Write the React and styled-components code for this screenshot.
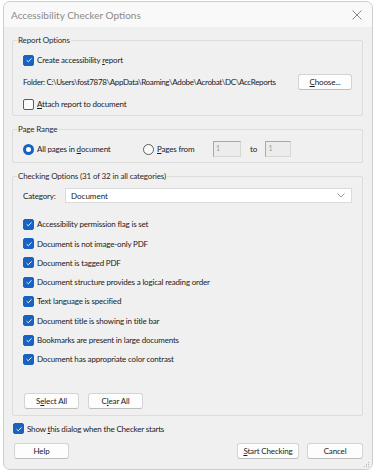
import React, { useState } from 'react';
import styled, { createGlobalStyle } from 'styled-components';

const GlobalStyle = createGlobalStyle`
  body {
    margin: 0;
    background: #ffffff;
    font-family: Lato, "Open Sans", sans-serif;
  }
`;

const checks = [
  'Accessibility permission flag is set',
  'Document is not image-only PDF',
  'Document is tagged PDF',
  'Document structure provides a logical reading order',
  'Text language is specified',
  'Document title is showing in title bar',
  'Bookmarks are present in large documents',
  'Document has appropriate color contrast',
];

const CheckBox = ({ checked, onClick }) => (
  <Box $checked={checked} onClick={onClick}>
    {checked && (
      <svg width="8" height="8" viewBox="0 0 8 8">
        <path d="M1.6 4.2 L3.3 5.8 L6.5 2.3" fill="none" stroke="#fff" strokeWidth="0.9" />
      </svg>
    )}
  </Box>
);

const Radio = ({ selected }) => <RadioDot $selected={selected} />;

const App = () => {
  const [items, setItems] = useState(checks.map(() => true));
  const [report, setReport] = useState(true);
  const [attach, setAttach] = useState(false);
  const [showDialog, setShowDialog] = useState(true);

  const toggle = (i) => setItems((prev) => prev.map((v, j) => (j === i ? !v : v)));

  return (
    <>
      <GlobalStyle />
      <Window>
        <TitleBar>
          <Title>Accessibility Checker Options</Title>
          <svg width="10" height="10" viewBox="0 0 10 10">
            <path d="M0.5 0.5 L9.5 9.5 M9.5 0.5 L0.5 9.5" stroke="#7a7a7a" strokeWidth="0.9" />
          </svg>
        </TitleBar>
        <Body>
          <Group $top={8}>
            <Legend>Report Options</Legend>
            <Rows $gap={6}>
              <Row>
                <CheckBox checked={report} onClick={() => setReport(!report)} />
                <Label>Create accessibility <u>r</u>eport</Label>
              </Row>
              <Row $between>
                <FolderText>Folder: C:\Users\fost7878\AppData\Roaming\Adobe\Acrobat\DC\AccReports</FolderText>
                <Button $w={54}><u>C</u>hoose...</Button>
              </Row>
              <Row>
                <CheckBox checked={attach} onClick={() => setAttach(!attach)} />
                <Label><u>A</u>ttach report to document</Label>
              </Row>
            </Rows>
          </Group>

          <Group $top={8} $pt={7} $pb={5}>
            <Legend>Page Range</Legend>
            <Row>
              <RadioItem $w={120}>
                <Radio selected />
                <Label>All pages in <u>d</u>ocument</Label>
              </RadioItem>
              <RadioItem $w={70}>
                <Radio />
                <Label><u>P</u>ages from</Label>
              </RadioItem>
              <PageInput $w={28}>1</PageInput>
              <ToLabel>to</ToLabel>
              <PageInput $w={26}>1</PageInput>
            </Row>
          </Group>

          <Group $top={8} $pt={7} $pb={6}>
            <Legend>Checking Options (31 of 32 in all categories)</Legend>
            <CategoryRow>
              <CategoryLabel>Cate<u>g</u>ory:</CategoryLabel>
              <Select>
                <span>Document</span>
                <svg width="8" height="5" viewBox="0 0 8 5">
                  <path d="M0.5 0.5 L4 4 L7.5 0.5" fill="none" stroke="#8a8a8a" strokeWidth="0.9" />
                </svg>
              </Select>
            </CategoryRow>
            <CheckList>
              {checks.map((c, i) => (
                <CheckRow key={c}>
                  <CheckBox checked={items[i]} onClick={() => toggle(i)} />
                  <Label>{c}</Label>
                </CheckRow>
              ))}
            </CheckList>
            <ButtonRow>
              <Button $w={55} onClick={() => setItems(checks.map(() => true))}>S<u>e</u>lect All</Button>
              <Button $w={55} onClick={() => setItems(checks.map(() => false))}>C<u>l</u>ear All</Button>
            </ButtonRow>
          </Group>

          <ShowRow>
            <CheckBox checked={showDialog} onClick={() => setShowDialog(!showDialog)} />
            <Label>Show <u>t</u>his dialog when the Checker starts</Label>
          </ShowRow>

          <Footer>
            <Button $w={55}>Help</Button>
            <FooterRight>
              <Button $w={62}><u>S</u>tart Checking</Button>
              <Button $w={56}>Cancel</Button>
            </FooterRight>
          </Footer>
        </Body>
        <Grip>
          <svg width="6" height="6" viewBox="0 0 6 6">
            <g fill="#b5b5b5">
              <rect x="4" y="0" width="1" height="1" />
              <rect x="2" y="2" width="1" height="1" />
              <rect x="4" y="2" width="1" height="1" />
              <rect x="0" y="4" width="1" height="1" />
              <rect x="2" y="4" width="1" height="1" />
              <rect x="4" y="4" width="1" height="1" />
            </g>
          </svg>
        </Grip>
      </Window>
    </>
  );
};

const Window = styled.div`
  position: relative;
  margin: 1px 0 0 3px;
  width: 368px;
  height: 467px;
  border: 1px solid #cdcdcd;
  border-radius: 7px;
  background: #f0f0f0;
  overflow: hidden;
  display: flex;
  flex-direction: column;
  color: #1a1a1a;
  font-size: 8px;
`;

const TitleBar = styled.div`
  height: 25px;
  background: #f9f9f9;
  display: flex;
  align-items: center;
  justify-content: space-between;
  padding: 0 10px 0 7px;
  flex-shrink: 0;
`;

const Title = styled.div`
  font-size: 10px;
  color: #8a8a8a;
`;

const Body = styled.div`
  display: flex;
  flex-direction: column;
  padding: 0 9px 0 8px;
`;

const Group = styled.fieldset`
  margin: ${(p) => p.$top || 8}px 0 0 0;
  border: 1px solid #dcdcdc;
  border-radius: 2px;
  padding: ${(p) => p.$pt || 7}px 10px ${(p) => p.$pb || 3}px 10px;
  min-width: 0;
`;

const Legend = styled.legend`
  margin-left: -6px;
  padding: 0 1px;
  height: 10px;
  line-height: 10px;
  font-size: 8px;
  color: #2a2a2a;
  letter-spacing: -0.15px;
`;

const Rows = styled.div`
  display: flex;
  flex-direction: column;
  gap: ${(p) => p.$gap}px;
`;

const Row = styled.div`
  display: flex;
  align-items: center;
  height: 16px;
  justify-content: ${(p) => (p.$between ? 'space-between' : 'flex-start')};
`;

const Label = styled.span`
  margin-left: 3px;
  white-space: nowrap;
  letter-spacing: -0.18px;
`;

const FolderText = styled.span`
  white-space: nowrap;
  letter-spacing: -0.35px;
`;

const Box = styled.span`
  box-sizing: border-box;
  width: 11px;
  height: 11px;
  border-radius: 2px;
  flex-shrink: 0;
  display: flex;
  align-items: center;
  justify-content: center;
  background: ${(p) => (p.$checked ? '#1862c1' : '#fbfbfb')};
  border: 1px solid ${(p) => (p.$checked ? '#1862c1' : '#5c5c5c')};
  cursor: pointer;
`;

const RadioDot = styled.span`
  box-sizing: border-box;
  width: 11px;
  height: 11px;
  border-radius: 50%;
  flex-shrink: 0;
  background: ${(p) => (p.$selected ? '#fff' : '#fbfbfb')};
  border: ${(p) => (p.$selected ? '3.5px solid #1862c1' : '1px solid #5c5c5c')};
`;

const RadioItem = styled.div`
  display: flex;
  align-items: center;
  width: ${(p) => p.$w}px;
  flex-shrink: 0;
`;

const PageInput = styled.div`
  box-sizing: border-box;
  width: ${(p) => p.$w}px;
  height: 16px;
  background: #ececec;
  border: 1px solid #d6d6d6;
  border-top-color: #a8a8a8;
  border-left-color: #a8a8a8;
  color: #a0a0a0;
  font-size: 7px;
  padding: 2px 0 0 2px;
`;

const ToLabel = styled.span`
  margin: 0 8px 0 9px;
`;

const CategoryRow = styled.div`
  display: flex;
  align-items: center;
  height: 15px;
`;

const CategoryLabel = styled.span`
  width: 42px;
  flex-shrink: 0;
  letter-spacing: -0.15px;
`;

const Select = styled.div`
  flex: 1;
  box-sizing: border-box;
  height: 15px;
  background: #ffffff;
  border: 1px solid #dadada;
  display: flex;
  align-items: center;
  justify-content: space-between;
  padding: 0 6px 0 5px;
`;

const CheckList = styled.div`
  display: flex;
  flex-direction: column;
  margin-top: 11.6px;
`;

const CheckRow = styled.div`
  display: flex;
  align-items: center;
  height: 19.3px;
`;

const ButtonRow = styled.div`
  display: flex;
  gap: 9px;
  margin-top: 24px;
  padding-left: 1px;
`;

const Button = styled.button`
  box-sizing: border-box;
  width: ${(p) => p.$w}px;
  height: 16px;
  padding: 0;
  background: #fdfdfd;
  border: 1px solid #d4d4d4;
  border-bottom-color: #bdbdbd;
  border-radius: 3px;
  font-family: inherit;
  font-size: 8px;
  color: #1a1a1a;
  letter-spacing: -0.15px;
  cursor: pointer;
`;

const ShowRow = styled.div`
  display: flex;
  align-items: center;
  height: 16px;
  margin-top: 5px;
  padding-left: 1px;
`;

const Footer = styled.div`
  display: flex;
  justify-content: space-between;
  margin-top: 6px;
  padding-left: 2px;
`;

const FooterRight = styled.div`
  display: flex;
  gap: 8px;
`;

const Grip = styled.div`
  position: absolute;
  right: 2px;
  bottom: 1px;
  line-height: 0;
`;

export default App;
